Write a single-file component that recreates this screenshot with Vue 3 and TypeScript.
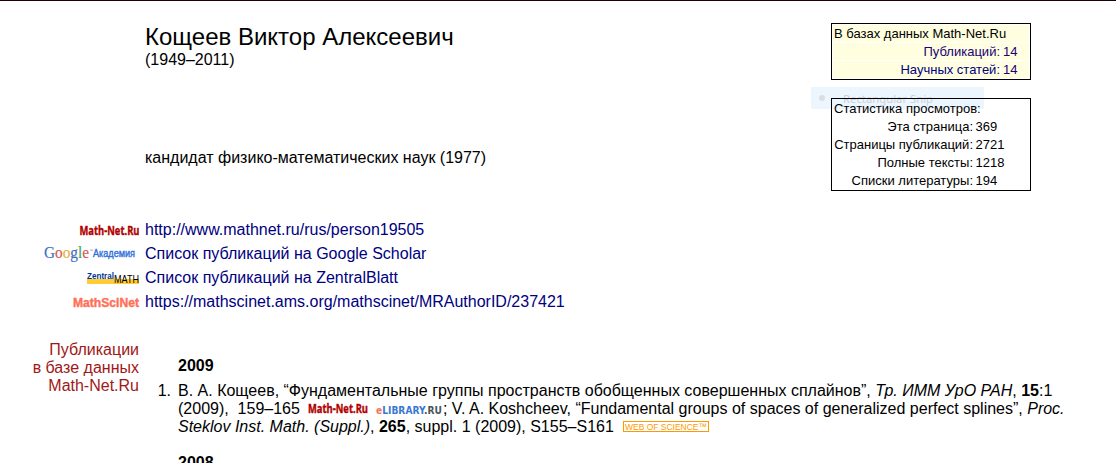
<template>
  <div class="page">
    <aside class="stats">
      <div class="snip"><span class="dot"></span><span>Rectangular Snip</span></div>
      <div class="box base">
        <div class="head">В базах данных Math-Net.Ru</div>
        <div v-for="row in baseStats" :key="row.label" class="row">
          <a class="label">{{ row.label }}:</a>
          <a class="value">{{ row.value }}</a>
        </div>
      </div>
      <div class="box views">
        <div class="head">Статистика просмотров:</div>
        <div v-for="row in viewStats" :key="row.label" class="row">
          <span class="label">{{ row.label }}:</span>
          <span class="value">{{ row.value }}</span>
        </div>
      </div>
    </aside>

    <header class="person">
      <h1>Кощеев Виктор Алексеевич</h1>
      <div>(1949–2011)</div>
      <p class="degree">кандидат физико-математических наук (1977)</p>
    </header>

    <div class="links">
      <div v-for="link in links" :key="link.text" class="link">
        <div class="logo">
          <svg v-if="link.logo === 'mathnet'" width="61" height="14">
            <text class="mathnet" x="0.5" y="12" textLength="60" lengthAdjust="spacingAndGlyphs">Math-Net.Ru</text>
          </svg>
          <svg v-else-if="link.logo === 'google'" class="google" width="98" height="20">
            <text class="google-word" x="2" y="12.5" textLength="45" lengthAdjust="spacingAndGlyphs"><tspan fill="#3f6fc6" stroke="#3f6fc6">G</tspan><tspan fill="#d8574e" stroke="#d8574e">o</tspan><tspan fill="#e2b33c" stroke="#e2b33c">o</tspan><tspan fill="#3f6fc6" stroke="#3f6fc6">g</tspan><tspan fill="#4aa45a" stroke="#4aa45a">l</tspan><tspan fill="#d8574e" stroke="#d8574e">e</tspan></text>
            <text x="47" y="7" font-size="4" fill="#777">™</text>
            <text class="academy" x="51" y="12" textLength="42" lengthAdjust="spacingAndGlyphs">Академия</text>
          </svg>
          <svg v-else-if="link.logo === 'zentral'" width="54" height="16">
            <rect x="1" y="9" width="52" height="5" fill="#fc3" />
            <text class="zentral" x="1" y="9" textLength="27" lengthAdjust="spacingAndGlyphs">Zentral</text>
            <text class="zmath" x="28" y="13" textLength="25" lengthAdjust="spacingAndGlyphs">MATH</text>
          </svg>
          <svg v-else width="68" height="14">
            <text class="mathsci" x="1" y="12" textLength="66" lengthAdjust="spacingAndGlyphs">MathSciNet</text>
          </svg>
        </div>
        <a>{{ link.text }}</a>
      </div>
    </div>

    <section class="publications">
      <div class="side">Публикации<br />в базе данных<br />Math-Net.Ru</div>
      <div class="list">
        <h2>2009</h2>
        <div class="entry">
          <span class="num">1.</span>
          <div>
            <div>В. А. Кощеев, “Фундаментальные группы пространств обобщенных совершенных сплайнов”, <i>Тр. ИММ УрО РАН</i>, <b>15</b>:1</div>
            <div class="line">
              <span>(2009), &nbsp;159–165</span>
              <svg class="inline-mathnet" width="61" height="14">
                <text class="mathnet" x="1" y="11" textLength="60" lengthAdjust="spacingAndGlyphs">Math-Net.Ru</text>
              </svg>
              <svg class="elibrary" width="67" height="14">
                <text class="elib" x="0" y="12" textLength="66" lengthAdjust="spacingAndGlyphs"><tspan fill="#f27455">e</tspan><tspan fill="#3978d0">LIBRARY</tspan><tspan fill="#47545c">.RU</tspan></text>
              </svg>
              <span>; V. A. Koshcheev, “Fundamental groups of spaces of generalized perfect splines”, <i>Proc.</i></span>
            </div>
            <div class="line">
              <span><i>Steklov Inst. Math. (Suppl.)</i>, <b>265</b>, suppl. 1 (2009), S155–S161</span>
              <svg class="wos" width="87" height="11">
                <rect x="0.5" y="0.5" width="85" height="10" fill="#fff" stroke="#f90" />
                <text x="2" y="9" textLength="82" lengthAdjust="spacingAndGlyphs">WEB OF SCIENCE™</text>
              </svg>
            </div>
          </div>
        </div>
        <h2 class="next">2008</h2>
      </div>
    </section>
  </div>
</template>

<script setup lang="ts">
interface Stat {
  label: string
  value: number
}

interface ProfileLink {
  logo: 'mathnet' | 'google' | 'zentral' | 'mathsci'
  text: string
}

const baseStats: Stat[] = [
  { label: 'Публикаций', value: 14 },
  { label: 'Научных статей', value: 14 },
]

const viewStats: Stat[] = [
  { label: 'Эта страница', value: 369 },
  { label: 'Страницы публикаций', value: 2721 },
  { label: 'Полные тексты', value: 1218 },
  { label: 'Списки литературы', value: 194 },
]

const links: ProfileLink[] = [
  { logo: 'mathnet', text: 'http://www.mathnet.ru/rus/person19505' },
  { logo: 'google', text: 'Список публикаций на Google Scholar' },
  { logo: 'zentral', text: 'Список публикаций на ZentralBlatt' },
  { logo: 'mathsci', text: 'https://mathscinet.ams.org/mathscinet/MRAuthorID/237421' },
]
</script>

<style>
body {
  margin: 0;
  overflow: hidden;
  background: #fff;
}
</style>

<style scoped>
.page {
  box-sizing: border-box;
  height: 463px;
  overflow: hidden;
  border-top: 1px solid #200000;
  font: 16px/18px "Liberation Sans", Arial, sans-serif;
  color: #000;
  white-space: nowrap;
}
a {
  color: #000080;
}
svg {
  display: block;
  flex: none;
  overflow: visible;
}
.stats {
  float: right;
  position: relative;
  width: 200px;
  margin: 22px 85px 0 0;
  font-size: 13px;
}
.box {
  position: relative;
  box-sizing: border-box;
  border: 1px solid #000;
  padding: 1px;
}
.base {
  display: flex;
  flex-direction: column;
  gap: 1px;
  height: 57px;
}
.base .head,
.base .label,
.base .value {
  height: 17px;
  line-height: 17px;
  background: #ffffe0;
}
.head {
  padding-left: 1px;
}
.row {
  display: flex;
}
.label {
  box-sizing: border-box;
  width: 167px;
  text-align: right;
}
.base .value {
  flex: 1;
  margin-left: 1px;
  padding-left: 2px;
}
.base .row:nth-child(2) a {
  color: #200078;
}
.base .row:nth-child(3) .value {
  color: #200078;
}
.views {
  height: 93px;
  margin-top: 18px;
}
.views .label {
  width: 140px;
}
.views .value {
  margin-left: 2.5px;
}
.snip {
  position: absolute;
  top: 64px;
  left: -20px;
  display: flex;
  align-items: center;
  gap: 18px;
  box-sizing: border-box;
  width: 173px;
  height: 22px;
  padding-left: 8px;
  background: #ebf6ff;
  color: #cdd0d5;
  font: 11.3px "Noto Sans", sans-serif;
}
.dot {
  width: 6px;
  height: 6px;
  border-radius: 50%;
  background: #dcdddf;
}
.person {
  height: 195px;
  padding: 22px 0 0 145px;
}
h1 {
  margin: 0;
  font-size: 24px;
  font-weight: normal;
  line-height: 28px;
}
.degree {
  margin: 80px 0 0;
}
.link {
  display: flex;
  align-items: center;
  height: 24px;
}
.logo {
  display: flex;
  justify-content: flex-end;
  width: 140px;
  margin-right: 5px;
}
.google {
  margin-top: 2px;
}
.mathnet {
  font: bold 12.5px "Open Sans", sans-serif;
  fill: #b00000;
  stroke: #b00000;
  stroke-width: 0.4px;
}
.google-word {
  font: 17px "Liberation Serif", serif;
  stroke-width: 0.2px;
}
.academy {
  font: 10.5px "Liberation Sans", sans-serif;
  fill: #2f70d8;
  stroke: #2f70d8;
  stroke-width: 0.4px;
}
.zentral {
  font: bold 9.5px "Liberation Sans", sans-serif;
  fill: #003399;
}
.zmath {
  font: 11px "Liberation Sans", sans-serif;
}
.mathsci {
  font: bold 12.5px "Liberation Sans", sans-serif;
  fill: #ff7058;
  stroke: #ff7058;
  stroke-width: 0.4px;
}
.publications {
  display: flex;
  margin-top: 27px;
}
.side {
  width: 139px;
  color: #a01818;
  text-align: right;
}
.list {
  padding-top: 16px;
}
h2 {
  margin: 0 0 7px 39px;
  font-size: 16px;
  line-height: 18px;
}
.entry {
  display: flex;
}
.num {
  width: 32px;
  padding-right: 7px;
  text-align: right;
}
.line {
  display: flex;
}
.inline-mathnet {
  margin: 2px 0 0 7px;
}
.elibrary {
  margin: 2px 0 0 8px;
}
.elib {
  font: bold 11px "DejaVu Sans", sans-serif;
}
.wos {
  margin: 3px 0 0 9px;
}
.wos text {
  font: 9.5px "Liberation Sans", sans-serif;
  fill: #f90;
}
.next {
  margin-top: 18px;
}
</style>
